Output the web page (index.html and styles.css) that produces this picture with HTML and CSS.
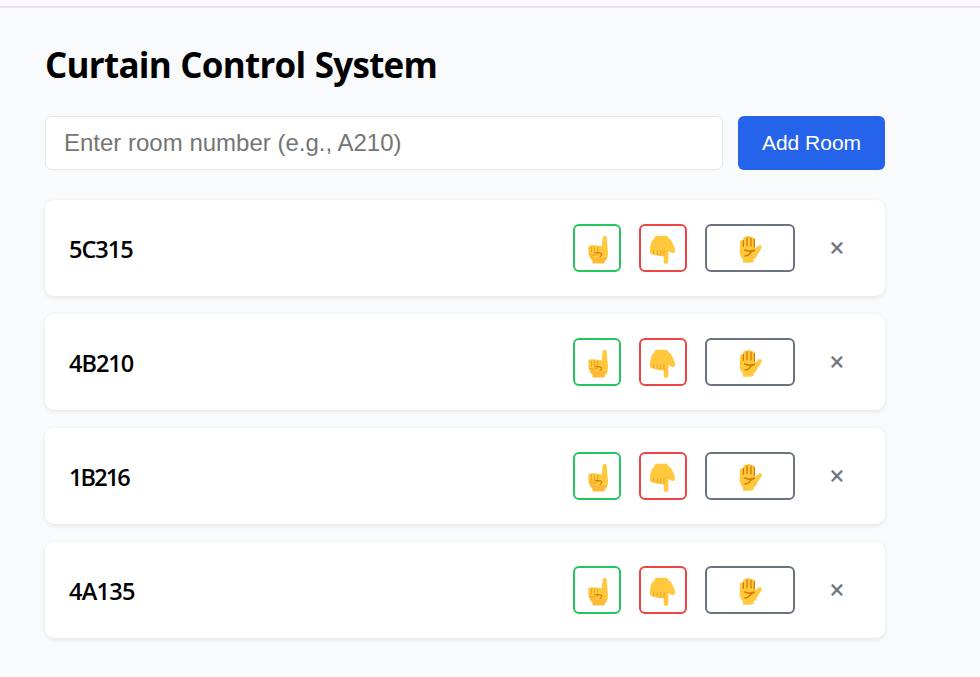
FILE: index.html
```html
<!DOCTYPE html>
<html lang="en">
<head>
<meta charset="utf-8">
<title>Curtain Control System</title>
<link rel="stylesheet" href="styles.css">
</head>
<body>
<svg class="defs" aria-hidden="true">
  <symbol id="up" viewBox="13 18 132 132">
    <path fill="#ffc83d" d="M96 54Q96 48 102 47Q108 47 108 54L112 99Q112 117 103 124L101 130H66V122Q55 114 53 98V80Q54 75 60 77Q63 73 70 77Q75 74 80 78Q86 75 93 80Z"/>
    <path fill="#ffb836" d="M57 103Q65 113 79 114L99 112L108 112Q106 120 101 124V130H66V122Q58 115 57 103Z"/>
    <path fill="none" stroke="#e39d23" stroke-width="2.5" stroke-linecap="round" d="M62 81V97M71 81V101M81 82V100M57 103Q70 110 82 103"/>
    <path fill="none" stroke="#d67d00" stroke-width="3.5" stroke-linecap="round" d="M75 98Q89 97 93 101Q94 104 88 110"/>
  </symbol>
  <symbol id="down" viewBox="17 18 132 132">
    <path fill="#ffc83d" d="M60 47H93Q98 48 99 54Q108 58 112 70L118 84Q121 95 116 98Q110 101 104 95L99 94V125Q98 132 91 132Q85 131 85 125V107Q82 111 77 107Q71 111 66 105Q60 109 55 103Q47 105 44 98Q43 80 48 67Q51 60 58 54Z"/>
    <path fill="none" stroke="#e39d23" stroke-width="2.5" stroke-linecap="round" d="M55 91V102M66 92V105M76 92V106M86 91V107"/>
  </symbol>
  <symbol id="palm" viewBox="22 19 132 132">
    <path fill="#ffc83d" d="M58 67Q60 60 66 63L68 67V56Q70 49 77 53Q80 46 87 49L91 54Q97 49 101 57V84Q107 87 110 81Q114 76 120 77Q126 79 121 88L110 105Q107 116 99 119V126Q91 130 78 129H67V119Q58 112 57 98Z"/>
    <path fill="none" stroke="#d67d00" stroke-width="4" stroke-linecap="round" d="M68 62V80M79 54V78M91 55V79M101 59V83"/>
    <path fill="none" stroke="#d67d00" stroke-width="4.5" stroke-linecap="round" stroke-linejoin="round" d="M72 91L84 95L101 92Q91 95 87 102Q82 108 73 109"/>
  </symbol>
</svg>
<div class="topbar"></div>
<main class="container">
  <h1 class="title">Curtain Control System</h1>
  <form class="add-form">
    <input class="room-input" type="text" placeholder="Enter room number (e.g., A210)">
    <button class="add-btn" type="button">Add Room</button>
  </form>
  <section class="rooms">
    <article class="room">
      <span class="room-name">5C315</span>
      <div class="controls">
        <button class="ctl open"><svg class="icon"><use href="#up"/></svg></button>
        <button class="ctl close"><svg class="icon"><use href="#down"/></svg></button>
        <button class="ctl stop"><svg class="icon"><use href="#palm"/></svg></button>
        <button class="remove">×</button>
      </div>
    </article>
    <article class="room">
      <span class="room-name">4B210</span>
      <div class="controls">
        <button class="ctl open"><svg class="icon"><use href="#up"/></svg></button>
        <button class="ctl close"><svg class="icon"><use href="#down"/></svg></button>
        <button class="ctl stop"><svg class="icon"><use href="#palm"/></svg></button>
        <button class="remove">×</button>
      </div>
    </article>
    <article class="room">
      <span class="room-name narrow">1B216</span>
      <div class="controls">
        <button class="ctl open"><svg class="icon"><use href="#up"/></svg></button>
        <button class="ctl close"><svg class="icon"><use href="#down"/></svg></button>
        <button class="ctl stop"><svg class="icon"><use href="#palm"/></svg></button>
        <button class="remove">×</button>
      </div>
    </article>
    <article class="room">
      <span class="room-name wide">4A135</span>
      <div class="controls">
        <button class="ctl open"><svg class="icon"><use href="#up"/></svg></button>
        <button class="ctl close"><svg class="icon"><use href="#down"/></svg></button>
        <button class="ctl stop"><svg class="icon"><use href="#palm"/></svg></button>
        <button class="remove">×</button>
      </div>
    </article>
  </section>
</main>
</body>
</html>
```
FILE: styles.css
```css
* { box-sizing: border-box; }
body {
  margin: 0;
  min-height: 677px;
  background: #f9fafc;
  color: #000;
  font-family: "Open Sans", "Noto Sans", sans-serif;
}
.defs { position: absolute; width: 0; height: 0; }
.topbar {
  height: 8px;
  background: #fdf7ff;
  border-bottom: 2px solid #e8e0eb;
}
.container { width: 840px; margin: 0 0 0 45px; padding-top: 32px; }
.title {
  margin: 0 0 26px;
  height: 50px;
  line-height: 50px;
  font-size: 35px;
  font-weight: 700;
  letter-spacing: -0.75px;
  word-spacing: 1px;
  white-space: nowrap;
}
.add-form { display: flex; gap: 15px; height: 54px; margin: 0 0 30px; }
.room-input {
  flex: 1;
  min-width: 0;
  padding: 0 18px;
  border: 1px solid #e5e7eb;
  border-radius: 6px;
  background: #fff;
  font: 24px "Liberation Sans", Arial, sans-serif;
}
.room-input::placeholder { color: #757575; opacity: 1; }
.add-btn {
  width: 147px;
  padding: 0;
  border: 0;
  border-radius: 6px;
  background: #2563eb;
  color: #fff;
  font: 21px "Liberation Sans", Arial, sans-serif;
}
.rooms { display: grid; gap: 18px; }
.room {
  display: flex;
  align-items: center;
  justify-content: space-between;
  height: 96px;
  padding: 0 24px;
  border-radius: 9px;
  background: #fff;
  box-shadow: 0 1.5px 4.5px rgba(0, 0, 0, 0.08);
}
.room-name {
  padding-top: 2px;
  font-size: 23.5px;
  font-weight: 600;
  letter-spacing: -1px;
}
.narrow { letter-spacing: -1.9px; }
.wide { letter-spacing: -0.7px; }
.controls { display: flex; align-items: center; gap: 18px; }
.ctl {
  display: flex;
  align-items: center;
  justify-content: center;
  width: 48px;
  height: 48px;
  padding: 0;
  border: 2px solid;
  border-radius: 6px;
  background: #fff;
}
.open { border-color: #22c55e; }
.close { border-color: #ef4444; }
.stop { width: 90px; border-color: #6b7280; }
.icon { display: block; width: 44px; height: 44px; }
.remove {
  width: 48px;
  height: 48px;
  padding: 0 0 2px;
  border: 0;
  background: none;
  color: #6b7280;
  font: 500 25px "Open Sans", sans-serif;
  -webkit-text-stroke: 0.5px #6b7280;
}
```
